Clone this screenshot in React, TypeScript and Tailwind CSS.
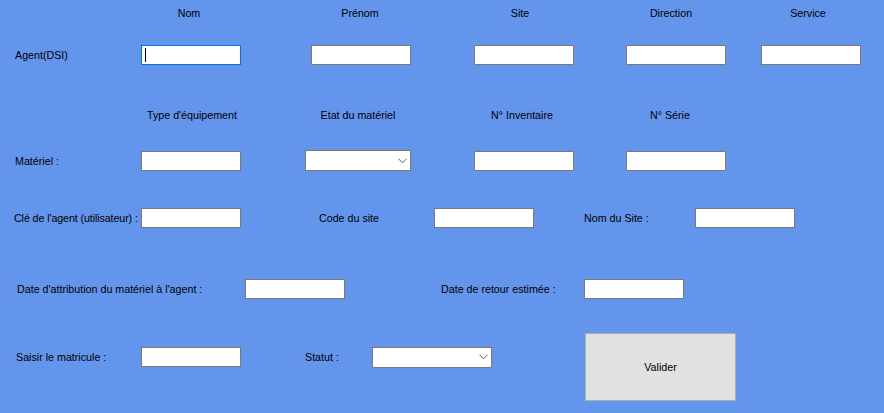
function Field({ className = '' }: { className?: string }) {
  return <div className={`h-[20px] w-[100px] shrink-0 border border-[#7a7a7a] bg-white ${className}`} />;
}

function Combo({ width }: { width: string }) {
  return (
    <div className={`flex h-[21px] ${width} shrink-0 items-center justify-end border border-[#7a7a7a] bg-white pr-[3px]`}>
      <svg width="9" height="6" viewBox="0 0 9 6" className="shrink-0">
        <path d="M0.5 0.8 L4.5 4.8 L8.5 0.8" fill="none" stroke="#5a5a5a" strokeWidth="1" />
      </svg>
    </div>
  );
}

export default function App() {
  return (
    <div
      className="flex h-[413px] w-[884px] flex-col overflow-hidden bg-[#6495ed] text-[10.7px] leading-[14px] text-black"
      style={{ fontFamily: '"Liberation Sans", Arial, sans-serif' }}
    >
      {/* Entêtes agent */}
      <div className="mt-[6px] flex h-[14px] items-center">
        <span className="ml-[139px] w-[100px] text-center">Nom</span>
        <span className="ml-[71px] w-[100px] text-center">Prénom</span>
        <span className="ml-[60px] w-[100px] text-center">Site</span>
        <span className="ml-[51px] w-[100px] text-center">Direction</span>
        <span className="ml-[37px] w-[100px] text-center">Service</span>
      </div>

      <div className="mt-[25px] flex h-[20px] items-center pl-[15px]">
        <span className="w-[126px] shrink-0">Agent(DSI)</span>
        <div className="flex h-[20px] w-[100px] shrink-0 items-center border border-[#0078d7] bg-white pl-[3px]">
          <span className="h-[14px] w-px bg-black" />
        </div>
        <Field className="ml-[70px]" />
        <Field className="ml-[63px]" />
        <Field className="ml-[52px]" />
        <Field className="ml-[35px]" />
      </div>

      {/* Entêtes matériel */}
      <div className="mt-[43px] flex h-[14px] items-center">
        <span className="ml-[142px] w-[100px] text-center whitespace-nowrap">Type d'équipement</span>
        <span className="ml-[66px] w-[100px] text-center whitespace-nowrap">Etat du matériel</span>
        <span className="ml-[64px] w-[100px] text-center whitespace-nowrap">N° Inventaire</span>
        <span className="ml-[48px] w-[100px] text-center whitespace-nowrap">N° Série</span>
      </div>

      <div className="mt-[28px] flex h-[21px] items-center pl-[15px]">
        <span className="w-[126px] shrink-0">Matériel :</span>
        <Field />
        <div className="ml-[64px]">
          <Combo width="w-[106px]" />
        </div>
        <Field className="ml-[63px]" />
        <Field className="ml-[52px]" />
      </div>

      <div className="mt-[37px] flex h-[20px] items-center pl-[14px]">
        <span className="w-[127px] shrink-0 whitespace-nowrap tracking-[-0.1px]">Clé de l'agent (utilisateur) :</span>
        <Field />
        <span className="ml-[78px] w-[115px] shrink-0">Code du site</span>
        <Field />
        <span className="ml-[50px] w-[111px] shrink-0">Nom du Site :</span>
        <Field />
      </div>

      <div className="mt-[51px] flex h-[20px] items-center pl-[17px]">
        <span className="w-[228px] shrink-0 whitespace-nowrap">Date d'attribution du matériel à l'agent :</span>
        <Field />
        <span className="ml-[96px] w-[143px] shrink-0 whitespace-nowrap">Date de retour estimée :</span>
        <Field />
      </div>

      <div className="mt-[34px] flex h-[68px] items-start pl-[16px]">
        <div className="mt-[14px] flex h-[20px] items-center">
          <span className="w-[125px] shrink-0">Saisir le matricule :</span>
          <Field />
          <span className="ml-[64px] w-[67px] shrink-0">Statut :</span>
          <Combo width="w-[120px]" />
        </div>
        <button className="ml-[93px] flex h-[68px] w-[151px] shrink-0 items-center justify-center border border-[#adadad] bg-[#e1e1e1] text-[10.7px]">
          Valider
        </button>
      </div>
    </div>
  );
}
